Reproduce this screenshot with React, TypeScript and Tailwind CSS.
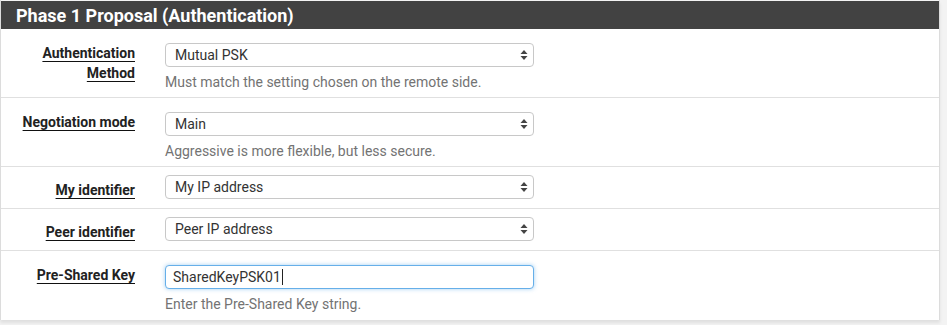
import React from "react";

const font = { fontFamily: "Roboto, 'Liberation Sans', sans-serif" };

function Arrows() {
  return (
    <svg width="8" height="12" viewBox="0 0 8 12" className="shrink-0">
      <path d="M4 1 L7.5 5 L0.5 5 Z" fill="#444" />
      <path d="M4 11 L7.5 7 L0.5 7 Z" fill="#444" />
    </svg>
  );
}

function Select({ value }: { value: string }) {
  return (
    <div className="flex h-[24px] w-[369px] items-center justify-between rounded-[4px] border border-[#c8c8c8] bg-white pl-[9px] pr-[5px] text-[14px] text-[#333]">
      <span>{value}</span>
      <Arrows />
    </div>
  );
}

function Label({ children }: { children: React.ReactNode }) {
  return (
    <div className="w-[134px] shrink-0 text-right text-[14px] font-bold leading-[20px] text-[#222]">
      <span className="underline decoration-[#111] underline-offset-[3px]">{children}</span>
    </div>
  );
}

function Row({
  label,
  control,
  help,
  last,
}: {
  label: React.ReactNode;
  control: React.ReactNode;
  help?: string;
  last?: boolean;
}) {
  return (
    <div className={`flex ${last ? "" : "border-b border-[#e0e0e0]"} ${help ? "h-[69px]" : "h-[42px]"}`}>
      <div className={help ? "pt-[14px]" : "pt-[13px]"}>
        <Label>{label}</Label>
      </div>
      <div className={`ml-[30px] flex flex-col ${help ? "pt-[14px]" : "pt-[8px]"}`}>
        {control}
        {help && <div className="mt-[5px] text-[14px] leading-[20px] text-[#737373]">{help}</div>}
      </div>
    </div>
  );
}

export default function App() {
  return (
    <div className="h-[325px] w-[947px] bg-[#f3f3f3]" style={font}>
      <div className="w-[940px] border-x border-[#dcdcdc] bg-white shadow-[0_3px_3px_rgba(0,0,0,0.08)]">
        <div className="h-[1px] bg-[#f3f3f3]" />
        <div className="flex h-[28px] items-center bg-[#424242] pl-[15px] text-[18px] font-bold text-white">
          Phase 1 Proposal (Authentication)
        </div>
        <Row
          label={
            <>
              Authentication
              <br />
              Method
            </>
          }
          control={<Select value="Mutual PSK" />}
          help="Must match the setting chosen on the remote side."
        />
        <Row
          label="Negotiation mode"
          control={<Select value="Main" />}
          help="Aggressive is more flexible, but less secure."
        />
        <Row label="My identifier" control={<Select value="My IP address" />} />
        <Row label="Peer identifier" control={<Select value="Peer IP address" />} />
        <Row
          label="Pre-Shared Key"
          control={
            <div className="flex h-[24px] w-[369px] items-center rounded-[4px] border border-[#66afe9] bg-white pl-[7px] text-[14px] text-[#333] shadow-[0_0_4px_rgba(102,175,233,0.6)]">
              <span>SharedKeyPSK01</span>
              <span className="ml-[1px] inline-block h-[16px] w-[1px] bg-[#222]" />
            </div>
          }
          help="Enter the Pre-Shared Key string."
          last
        />
      </div>
    </div>
  );
}
